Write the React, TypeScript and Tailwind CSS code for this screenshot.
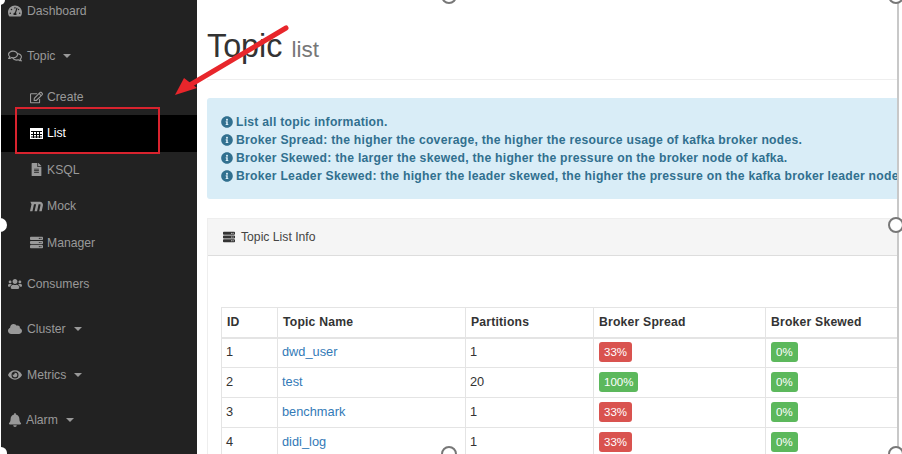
import type { ReactNode } from "react"
import {
  FaTachometerAlt,
  FaRegComments,
  FaRegEdit,
  FaFileAlt,
  FaMaxcdn,
  FaServer,
  FaUsers,
  FaCloud,
  FaEye,
  FaBell,
  FaInfoCircle,
} from "react-icons/fa"

// fa-table from the old icon set: white cells split by dark lines
function TableIcon() {
  return (
    <svg width="13" height="11" viewBox="0 0 13 11" fill="none">
      <rect x="0" y="0" width="13" height="11" fill="#fff" />
      <path d="M1 3.5h11M1 6.5h11M1 9h11M3.5 3v7M6.5 3v7M9.5 3v7" stroke="#000" />
    </svg>
  )
}

function Caret() {
  return <span className="ml-[8px] h-0 w-0 border-x-[4px] border-t-[4px] border-x-transparent border-t-[#999]" />
}

function NavItem({ icon, label, caret, narrow }: { icon: ReactNode; label: string; caret?: boolean; narrow?: boolean }) {
  return (
    <div className="flex h-[45.5px] items-center pl-[7px] text-[#999]">
      <span className={`flex items-center text-[14px] ${narrow ? "w-[18px]" : "w-[19px]"}`}>{icon}</span>
      {label}
      {caret && <Caret />}
    </div>
  )
}

function SubItem({ icon, label, active }: { icon: ReactNode; label: string; active?: boolean }) {
  return (
    <div className={`flex h-[36.4px] items-center pl-[29px] ${active ? "bg-black text-white" : "text-[#999]"}`}>
      <span className="flex w-[17px] items-center text-[13px]">{icon}</span>
      {label}
    </div>
  )
}

function Handle({ className }: { className: string }) {
  return <div className={`absolute h-[16px] w-[16px] rounded-full border-2 border-[#777] bg-white ${className}`} />
}

const notes = [
  "List all topic information.",
  "Broker Spread: the higher the coverage, the higher the resource usage of kafka broker nodes.",
  "Broker Skewed: the larger the skewed, the higher the pressure on the broker node of kafka.",
  "Broker Leader Skewed: the higher the leader skewed, the higher the pressure on the kafka broker leader nodes.",
]

const topics = [
  { id: 1, name: "dwd_user", partitions: 1, spread: 33, skewed: 0 },
  { id: 2, name: "test", partitions: 20, spread: 100, skewed: 0 },
  { id: 3, name: "benchmark", partitions: 1, spread: 33, skewed: 0 },
  { id: 4, name: "didi_log", partitions: 1, spread: 33, skewed: 0 },
]

function Badge({ value }: { value: number }) {
  const ok = value === 0 || value === 100
  return (
    <span className={`inline-block rounded-[3px] px-[5px] py-[3px] text-[11.5px] leading-[14px] text-white ${ok ? "bg-[#5cb85c]" : "bg-[#d9534f]"}`}>
      {value}%
    </span>
  )
}

export default function App() {
  return (
    <div className="relative flex h-[454px] w-[902px] overflow-hidden bg-white font-['Liberation_Sans',Arial,sans-serif] text-[12.2px] text-[#333]">
      {/* sidebar, page is scrolled a bit so the first row is cut */}
      <aside className="h-full w-[197px] shrink-0 overflow-hidden border-l border-white bg-[#222]">
        <div className="-mt-[12px]">
          <NavItem icon={<FaTachometerAlt />} label="Dashboard" />
          <NavItem icon={<FaRegComments />} label="Topic" caret />
          <SubItem icon={<FaRegEdit />} label="Create" />
          <SubItem icon={<TableIcon />} label="List" active />
          <SubItem icon={<FaFileAlt />} label="KSQL" />
          <SubItem icon={<FaMaxcdn />} label="Mock" />
          <SubItem icon={<FaServer />} label="Manager" />
          <NavItem icon={<FaUsers />} label="Consumers" />
          <NavItem icon={<FaCloud />} label="Cluster" caret />
          <NavItem icon={<FaEye />} label="Metrics" caret />
          <NavItem icon={<FaBell />} label="Alarm" caret narrow />
        </div>
      </aside>

      <main className="h-full w-[700px] shrink-0 overflow-hidden pl-[10px]">
        <div className="w-[760px]">
          <div className="flex h-[80px] items-baseline gap-[9px] border-b border-[#eee] pt-[27px]">
            <h1 className="text-[32.3px] leading-[38px] font-normal text-[#333]">Topic</h1>
            <span className="text-[22.5px] leading-none text-[#777]">list</span>
          </div>

          <div className="mt-[18px] h-[101px] rounded-[3px] bg-[#d9edf7] pt-[15px] pl-[14px] font-bold tracking-[0.25px] text-[#31708f]">
            {notes.map((n) => (
              <div key={n} className="flex h-[18px] items-center whitespace-nowrap">
                <FaInfoCircle className="mr-[3px] text-[12px]" />
                {n}
              </div>
            ))}
          </div>

          <div className="mt-[19px] border border-[#eee]">
            <div className="flex h-[37px] items-center gap-[6px] border-b border-[#ddd] bg-[#f5f5f5] pl-[15px] text-[#444]">
              <FaServer className="text-[12px] text-[#333]" />
              Topic List Info
            </div>
            <div className="px-[13px] pt-[51px] pb-[20px]">
              <table className="w-[745px] table-fixed border-collapse">
                <colgroup>
                  <col className="w-[56px]" />
                  <col className="w-[188px]" />
                  <col className="w-[128px]" />
                  <col className="w-[172px]" />
                  <col />
                </colgroup>
                <thead>
                  <tr className="h-[30px] text-left">
                    {["ID", "Topic Name", "Partitions", "Broker Spread", "Broker Skewed"].map((h) => (
                      <th key={h} className="border border-b-2 border-[#e4e4e4] px-[5px] font-bold tracking-[0.2px]">
                        {h}
                      </th>
                    ))}
                  </tr>
                </thead>
                <tbody className="text-[12.8px]">
                  {topics.map((t) => (
                    <tr key={t.id} className="h-[30px]">
                      <td className="border border-[#e4e4e4] pb-[2px] pl-[4px]">{t.id}</td>
                      <td className="border border-[#e4e4e4] pb-[2px] pl-[4px] text-[#337ab7]">{t.name}</td>
                      <td className="border border-[#e4e4e4] pb-[2px] pl-[4px]">{t.partitions}</td>
                      <td className="border border-[#e4e4e4] pb-[2px] pl-[5px]"><Badge value={t.spread} /></td>
                      <td className="border border-[#e4e4e4] pb-[2px] pl-[5px]"><Badge value={t.skewed} /></td>
                    </tr>
                  ))}
                </tbody>
              </table>
            </div>
          </div>
        </div>
      </main>

      <div className="h-full flex-1 border-l-2 border-[#c8c8c8] bg-white" />

      {/* annotations drawn over the screenshot */}
      <div className="absolute top-[107px] left-[15px] h-[47px] w-[145px] border-2 border-[#d9232e]" />
      <svg className="absolute top-0 left-0" width="902" height="454" fill="none">
        <path d="M286 28 L190 85" stroke="#e8262b" strokeWidth="5" strokeLinecap="round" />
        <path d="M175 95 L184 78 L197 88 Z" fill="#e8262b" />
      </svg>
      <Handle className="top-[-12px] left-[441px]" />
      <Handle className="top-[-12px] left-[888px]" />
      <Handle className="top-[217px] left-[888px]" />
      <Handle className="top-[446px] left-[441px]" />
      <Handle className="top-[446px] left-[888px]" />
      <div className="absolute top-[218px] left-[-7px] h-[14px] w-[14px] rounded-full bg-white" />
      <div className="absolute top-[-5px] left-[-5px] h-[10px] w-[10px] rounded-full bg-white" />
      <div className="absolute top-[447px] left-[-5px] h-[12px] w-[12px] rounded-full bg-white" />
    </div>
  )
}
